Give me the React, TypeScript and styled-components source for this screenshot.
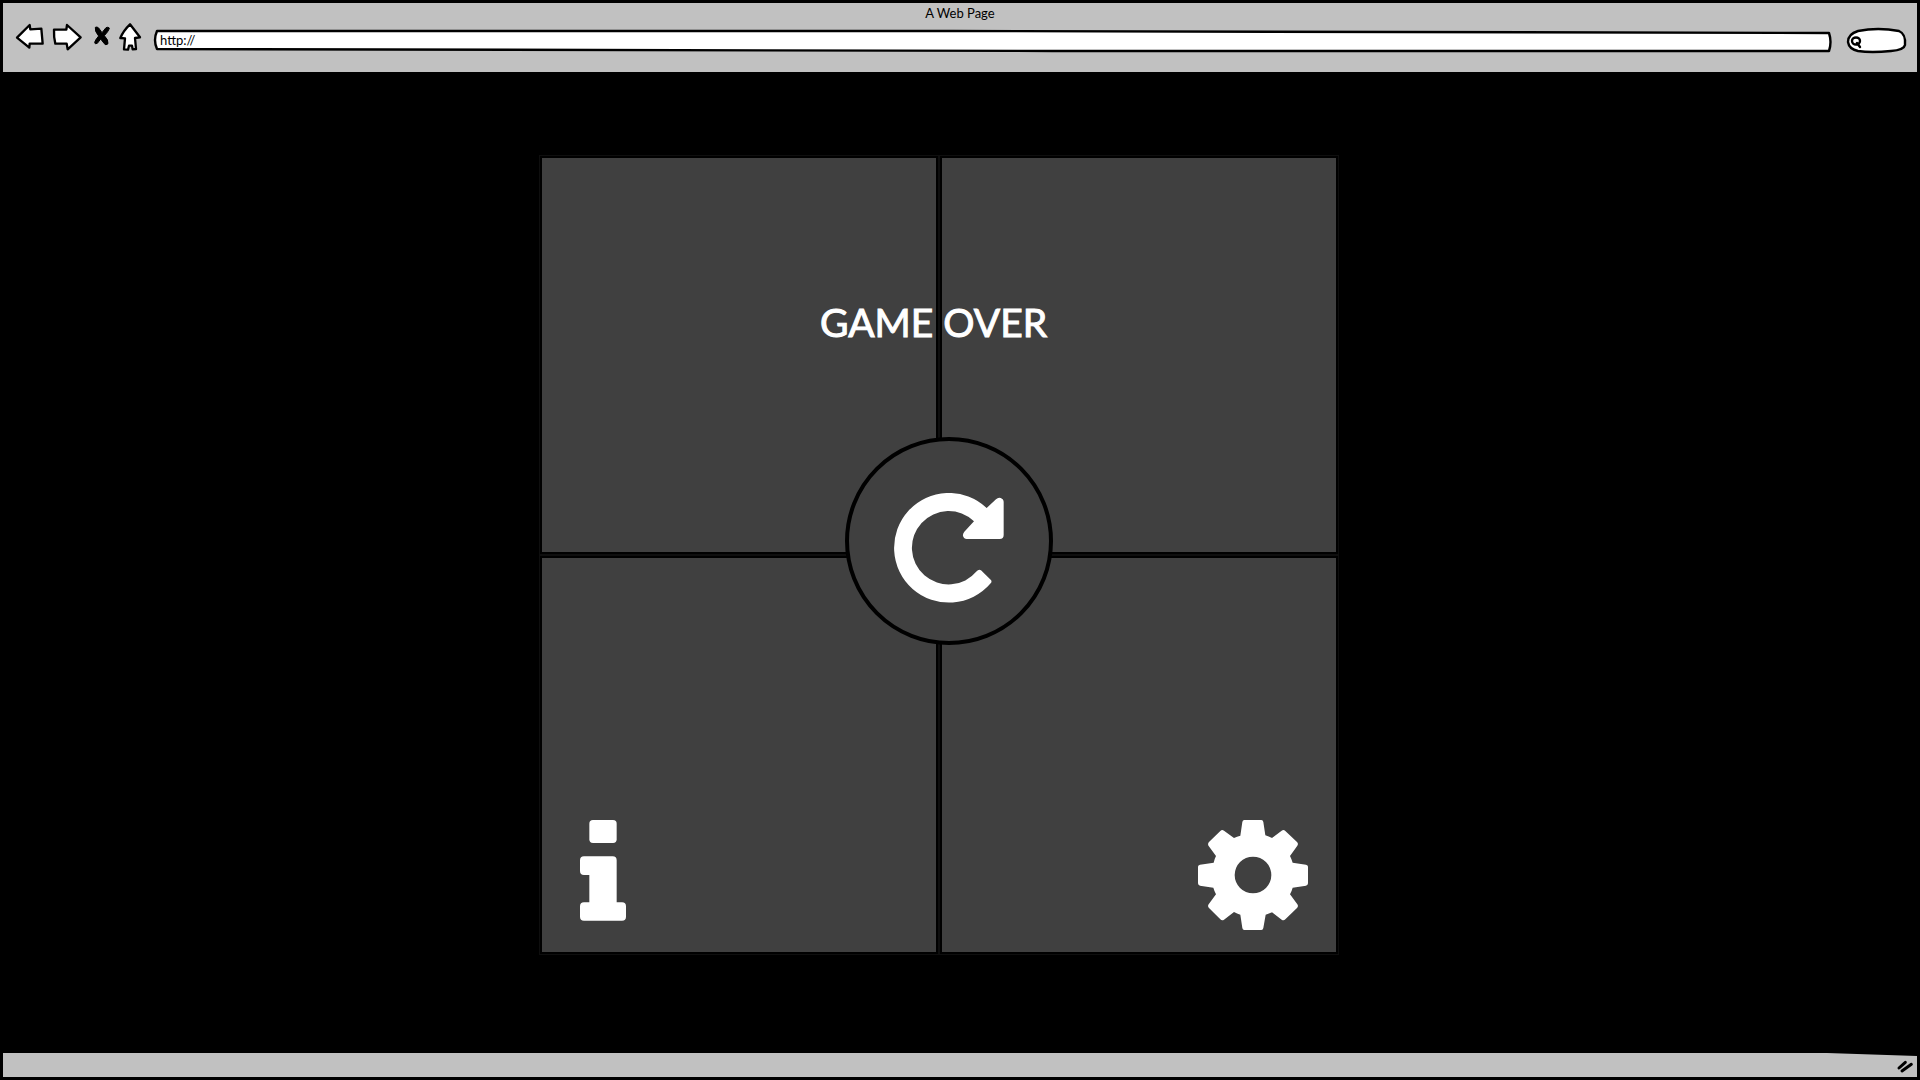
import React from "react";
import styled, { createGlobalStyle } from "styled-components";

const INK = "#000000";
const CHROME = "#c1c1c1";
const TILE = "#404040";
const PAPER = "#ffffff";
const SEAM = "#0e0e0e";

const GlobalStyle = createGlobalStyle`
  * { box-sizing: border-box; }
  body { margin: 0; background: #000000; }
`;

const Browser = styled.div`
  min-height: 100vh;
  display: flex;
  flex-direction: column;
  background: ${INK};
  font-family: Lato, "Noto Sans", sans-serif;
`;

const Header = styled.header`
  display: flex;
  flex-direction: column;
  height: 72px;
  border: 3px solid ${INK};
  border-bottom: 0;
  background: ${CHROME};
`;

const PageTitle = styled.div`
  height: 19px;
  line-height: 20px;
  font-size: 13px;
  text-align: center;
  color: ${INK};
`;

const Toolbar = styled.div`
  display: flex;
  align-items: center;
  gap: 8px;
  height: 30px;
  padding: 0 9px 0 12px;
`;

const PlainButton = styled.button`
  display: block;
  flex: none;
  padding: 0;
  border: 0;
  background: none;
  cursor: pointer;
  svg { display: block; overflow: visible; }
`;

const Field = styled.label<{ $width?: number }>`
  position: relative;
  display: block;
  height: 30px;
  ${(p) => (p.$width ? `flex: none; width: ${p.$width}px; margin-left: 6px;` : "flex: 1; min-width: 0;")}
`;

const FieldOutline = styled.svg`
  position: absolute;
  inset: 0;
  width: 100%;
  height: 100%;
  overflow: visible;
  path { vector-effect: non-scaling-stroke; }
`;

const FieldInput = styled.input<{ $indent: number }>`
  position: relative;
  display: block;
  width: 100%;
  height: 30px;
  padding: 6px 8px 0 ${(p) => p.$indent}px;
  border: 0;
  outline: 0;
  background: transparent;
  color: ${INK};
  font-family: inherit;
  font-size: 13px;
  line-height: 20px;
`;

const Stage = styled.main`
  flex: 1;
  display: flex;
  justify-content: center;
  align-items: flex-start;
  padding: 83px 42px 98px 0;
  background: ${INK};
`;

const Board = styled.div`
  position: relative;
  display: grid;
  grid-template-columns: repeat(2, 394px);
  grid-auto-rows: 394px;
  gap: 6px;
  padding: 2px;
  border: 1px solid ${SEAM};
`;

const Tile = styled.section<{ $end?: boolean }>`
  display: flex;
  align-items: flex-end;
  justify-content: ${(p) => (p.$end ? "flex-end" : "flex-start")};
  padding: ${(p) => (p.$end ? "0 28px 22px 0" : "0 0 31px 38px")};
  background: ${TILE};
  outline: 2px solid ${INK};
  box-shadow: 0 0 0 3px ${SEAM};
`;

const Message = styled.h1`
  position: absolute;
  top: 142px;
  left: 0;
  width: 100%;
  margin: 0;
  padding-right: 11px;
  text-align: center;
  color: ${PAPER};
  font-size: 39px;
  line-height: 48px;
  font-weight: 400;
  -webkit-text-stroke: 1px ${PAPER};
`;

const RestartButton = styled.button`
  position: absolute;
  top: 281px;
  left: 305px;
  width: 208px;
  height: 208px;
  display: flex;
  align-items: center;
  justify-content: center;
  padding: 14px 0 0;
  border: 4px solid ${INK};
  border-radius: 50%;
  background: ${TILE};
  cursor: pointer;
`;

const Footer = styled.footer`
  position: relative;
  display: flex;
  justify-content: flex-end;
  align-items: center;
  height: 27px;
  padding: 2px 3px 0 0;
  border: 3px solid ${INK};
  border-top: 0;
  background: ${CHROME};
`;

const Taper = styled.svg`
  position: absolute;
  top: 0;
  right: 0;
`;

const sketch = {
  fill: PAPER,
  stroke: INK,
  strokeWidth: 7,
  strokeLinejoin: "round" as const,
  strokeLinecap: "round" as const,
};

const BackIcon = () => (
  <svg width="29" height="30" viewBox="45 66 87 90">
    <path {...sketch} d="M51 113 L89 75 L91 88 L124 86 L128 131 L89 131 L88 143 Z" />
  </svg>
);

const ForwardIcon = () => (
  <svg width="30" height="30" viewBox="156 66 90 90">
    <path {...sketch} d="M162 89 L199 89 L201 75 L242 112 L203 148 L200 131 L166 131 Q161 110 162 89 Z" />
  </svg>
);

const StopIcon = () => (
  <svg width="20" height="30" viewBox="270 66 60 90">
    <path
      fill={INK}
      stroke={INK}
      strokeWidth="3"
      strokeLinejoin="round"
      d="M286 82 Q291 79 296 84 L306 98 L318 83 Q324 80 328 84 Q327 92 313 107 Q326 120 324 131 Q317 138 313 131 L302 117 L292 130 Q284 134 284 127 Q285 121 296 108 Q283 93 286 82 Z"
    />
  </svg>
);

const HomeIcon = () => (
  <svg width="27" height="30" viewBox="354 66 81 90">
    <path
      {...sketch}
      d="M390 73 L420 112 L405 114 L408 147 L398 148 L396 137 L387 137 L384 149 L372 148 L375 115 L361 114 Q370 92 390 73 Z"
    />
  </svg>
);

const RestartIcon = () => (
  <svg width="110" height="110" viewBox="162 189 330 330" aria-hidden="true">
    <path
      fill={PAPER}
      d="M440 234 L468 208 Q474 202 482 204 Q491 207 491 216 L491 315 Q491 327 479 327 L380 327 Q372 327 369 318 Q368 311 373 305 L402 274 A110 110 0 1 0 410 424 Q416 416 423 421 L452 449 Q457 454 452 460 A164.500 164.500 0 1 1 440 234 Z"
    />
  </svg>
);

const InfoIcon = () => (
  <svg width="46" height="101" viewBox="150 60 138 303" aria-hidden="true">
    <rect x="178" y="60" width="82" height="69" rx="11" fill={PAPER} />
    <path
      fill={PAPER}
      d="M162 169 H248 Q260 169 260 181 V307 H276 Q288 307 288 319 V350 Q288 362 276 362 H162 Q150 362 150 350 V319 Q150 307 162 307 H178 V225 H162 Q150 225 150 213 V181 Q150 169 162 169 Z"
    />
  </svg>
);

const GearIcon = () => (
  <svg width="110" height="110" viewBox="54 60 330 330" aria-hidden="true">
    <path
      fill={PAPER}
      fillRule="evenodd"
      d="M193 60 H244 Q249 60 250 66 L256 106 Q266 109 276 114 L305 92 Q311 88 316 93 L351 126 Q356 131 352 137 L330 168 Q335 178 338 188 L378 194 Q384 195 384 200 V250 Q384 256 378 257 L338 263 Q335 274 330 283 L352 313 Q356 319 351 324 L316 358 Q311 363 305 359 L276 337 Q267 341 257 344 L250 384 Q249 390 244 390 H193 Q188 390 187 384 L181 344 Q171 341 162 336 L132 359 Q126 363 121 358 L87 324 Q82 319 86 313 L108 283 Q103 273 100 263 L60 257 Q54 256 54 250 V200 Q54 195 60 194 L101 188 Q103 178 108 168 L86 138 Q82 132 87 126 L121 93 Q126 88 132 92 L162 114 Q171 109 181 107 L187 66 Q188 60 193 60 Z M219 170 A55 55 0 1 0 219 280 A55 55 0 1 0 219 170 Z"
    />
  </svg>
);

export default function App() {
  return (
    <>
      <GlobalStyle />
      <Browser>
        <Header>
          <PageTitle>A Web Page</PageTitle>
          <Toolbar>
            <PlainButton aria-label="Back"><BackIcon /></PlainButton>
            <PlainButton aria-label="Forward"><ForwardIcon /></PlainButton>
            <PlainButton aria-label="Stop"><StopIcon /></PlainButton>
            <PlainButton aria-label="Home"><HomeIcon /></PlainButton>
            <Field>
              <FieldOutline viewBox="0 0 1680 30" preserveAspectRatio="none" aria-hidden="true">
                <path
                  d="M4 9 L800 9 L1677 11 Q1680 20 1677 29 L900 29 L4 27 Q0 18 4 9 Z"
                  fill={PAPER}
                  stroke={INK}
                  strokeWidth="2.400"
                  strokeLinejoin="round"
                />
              </FieldOutline>
              <FieldInput $indent={7} type="text" aria-label="Address" defaultValue="http://" />
            </Field>
            <Field $width={62}>
              <FieldOutline viewBox="0 0 62 30" preserveAspectRatio="none" aria-hidden="true">
                <path
                  d="M12 9 Q32 5 53 9 Q60 12 59 23 Q58 28 45 29 Q25 31 12 29 Q3 27 2 20 Q2 12 12 9 Z"
                  fill={PAPER}
                  stroke={INK}
                  strokeWidth="2.400"
                />
                <path d="M6 19 a4 3.500 0 1 0 8 0 a4 3.500 0 1 0 -8 0 M11 21 L14 25" fill="none" stroke={INK} strokeWidth="2.400" strokeLinecap="round" />
              </FieldOutline>
              <FieldInput $indent={18} type="text" aria-label="Search" />
            </Field>
          </Toolbar>
        </Header>

        <Stage>
          <Board>
            <Tile />
            <Tile />
            <Tile>
              <PlainButton aria-label="Information"><InfoIcon /></PlainButton>
            </Tile>
            <Tile $end>
              <PlainButton aria-label="Settings"><GearIcon /></PlainButton>
            </Tile>
            <Message>GAME OVER</Message>
            <RestartButton aria-label="Restart"><RestartIcon /></RestartButton>
          </Board>
        </Stage>

        <Footer>
          <Taper width="90" height="3" viewBox="0 0 90 3" aria-hidden="true">
            <path d="M0 0 H90 V3 Z" fill={INK} />
          </Taper>
          <svg width="18" height="15" viewBox="0 0 54 45" aria-hidden="true">
            <path d="M9 27 L28 10 M18 36 L46 16" fill="none" stroke={INK} strokeWidth="9" strokeLinecap="round" />
          </svg>
        </Footer>
      </Browser>
    </>
  );
}
